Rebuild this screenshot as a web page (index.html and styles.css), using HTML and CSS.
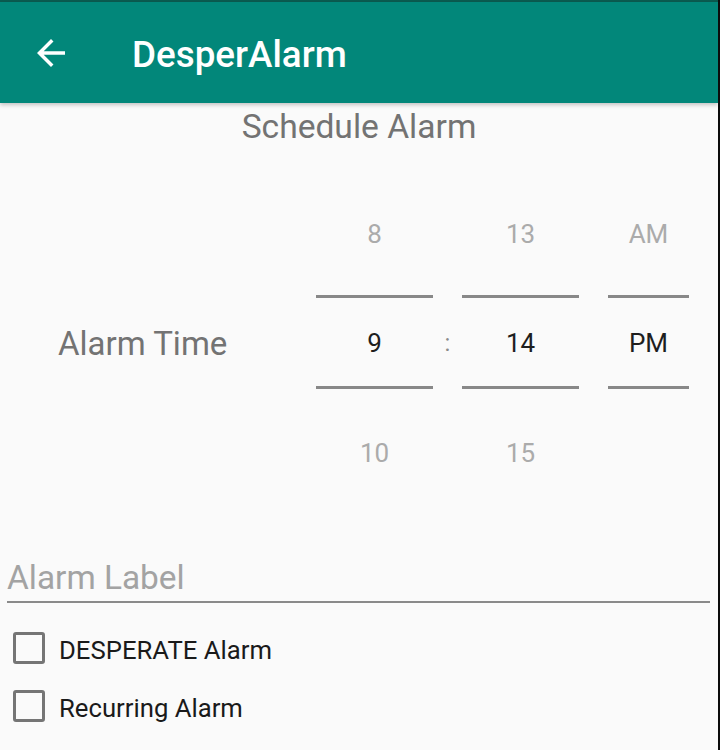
FILE: index.html
```html
<!DOCTYPE html>
<html>
<head>
<meta charset="utf-8">
<link rel="stylesheet" href="styles.css">
</head>
<body>
<div class="screen">
  <div class="statusbar"></div>
  <header class="appbar">
    <svg class="back" viewBox="0 0 24 24" width="42" height="42"><path fill="#fff" d="M20 11H7.83l5.59-5.59L12 4l-8 8 8 8 1.41-1.41L7.83 13H20v-2z"/></svg>
    <h1 class="title">DesperAlarm</h1>
  </header>
  <main class="content">
    <h2 class="heading">Schedule Alarm</h2>
    <section class="time-row">
      <div class="time-label">Alarm Time</div>
      <div class="pickers">
        <div class="picker wide">
          <div class="cell top faded">8</div>
          <div class="rule"></div>
          <div class="cell mid">9</div>
          <div class="rule"></div>
          <div class="cell bottom faded">10</div>
        </div>
        <div class="sep">:</div>
        <div class="picker wide">
          <div class="cell top faded">13</div>
          <div class="rule"></div>
          <div class="cell mid">14</div>
          <div class="rule"></div>
          <div class="cell bottom faded">15</div>
        </div>
        <div class="sep"></div>
        <div class="picker narrow">
          <div class="cell top faded">AM</div>
          <div class="rule"></div>
          <div class="cell mid">PM</div>
          <div class="rule"></div>
          <div class="cell bottom faded"></div>
        </div>
      </div>
    </section>
    <div class="label-field">
      <input class="label-input" type="text" placeholder="Alarm Label">
    </div>
    <label class="check-row"><span class="box"></span><span class="check-text">DESPERATE Alarm</span></label>
    <label class="check-row"><span class="box"></span><span class="check-text">Recurring Alarm</span></label>
  </main>
</div>
</body>
</html>
```
FILE: styles.css
```css
html, body {
  margin: 0;
  padding: 0;
  background: #0c0c0c;
}
body {
  font-family: Roboto, "Noto Sans", sans-serif;
}
.screen {
  width: 718px;
  height: 750px;
  background: #fafafa;
  overflow: hidden;
  display: flex;
  flex-direction: column;
}
.statusbar {
  height: 2px;
  background: #0b5b50;
}
.appbar {
  height: 101px;
  background: #02877a;
  display: flex;
  align-items: center;
  padding-left: 30px;
  box-shadow: 0 2px 4px rgba(0,0,0,0.22);
  position: relative;
  z-index: 1;
}
.back {
  display: block;
  flex: none;
}
.title {
  margin: 4px 0 0 60px;
  color: #fff;
  font-weight: 500;
  font-size: 36.8px;
  line-height: 40px;
}
.content {
  display: flex;
  flex-direction: column;
}
.heading {
  margin: 4px 0 0;
  text-align: center;
  font-weight: 400;
  font-size: 33.6px;
  line-height: 40px;
  color: #737373;
}
.time-row {
  margin-top: 72px;
  display: flex;
  align-items: center;
}
.time-label {
  width: 316px;
  padding-left: 58px;
  box-sizing: border-box;
  font-size: 33px;
  line-height: 40px;
  color: #737373;
}
.pickers {
  display: flex;
}
.picker {
  display: flex;
  flex-direction: column;
}
.picker.wide { width: 117px; }
.picker.narrow { width: 81px; }
.sep {
  width: 29px;
  text-align: center;
  font-size: 24px;
  color: #8a8a8a;
  align-self: center;
  line-height: 30px;
  margin-top: -2px;
}
.cell {
  height: 30px;
  line-height: 30px;
  text-align: center;
  font-size: 26px;
  color: #1e1e1e;
}
.cell.faded { color: #ababab; }
.cell.top { margin-bottom: 46px; }
.cell.mid { margin: 30px 0 28px; }
.cell.bottom { margin-top: 49px; }
.rule {
  height: 3px;
  background: #888888;
}
.label-field {
  margin: 90px 8px 0 7px;
  border-bottom: 2px solid #8a8a8a;
  padding-bottom: 3px;
}
.label-input {
  display: block;
  width: 100%;
  box-sizing: border-box;
  border: 0;
  margin: 0;
  padding: 0;
  background: transparent;
  font-family: Roboto, "Noto Sans", sans-serif;
  font-size: 33.4px;
  line-height: 40px;
  height: 40px;
  color: #222;
  outline: none;
}
.label-input::placeholder {
  color: #a3a3a3;
}
.check-row {
  height: 58px;
  display: flex;
  align-items: center;
  padding-left: 13px;
}
.label-field + .check-row { margin-top: 16px; }
.box {
  width: 32px;
  height: 32px;
  box-sizing: border-box;
  border: 3px solid #757575;
  border-radius: 3px;
  flex: none;
}
.check-text {
  margin: 3px 0 0 14px;
  font-size: 25.7px;
  line-height: 30px;
  color: #1a1a1a;
}
```
